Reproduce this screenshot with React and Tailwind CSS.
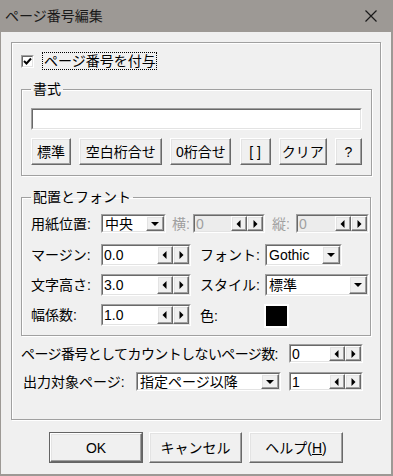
import React from 'react';

const raised =
  'bg-[#f0f0f0] border border-t-white border-l-white border-r-[#696969] border-b-[#696969] shadow-[inset_-1px_-1px_0_#a0a0a0,inset_1px_1px_0_#e3e3e3]';

const Sunken = ({ className, inner, children }) => (
  <div className={`border border-t-[#a0a0a0] border-l-[#a0a0a0] border-r-white border-b-white ${className}`}>
    <div className={`h-full flex border border-t-[#696969] border-l-[#696969] border-r-[#e3e3e3] border-b-[#e3e3e3] ${inner}`}>
      {children}
    </div>
  </div>
);

const Tri = ({ dir }) => (
  <svg width="8" height="8" viewBox="0 0 8 8">
    {dir === 'left' && <polygon points="5.5,0 5.5,8 1.5,4" fill="#000" />}
    {dir === 'right' && <polygon points="2.5,0 2.5,8 6.5,4" fill="#000" />}
    {dir === 'down' && <polygon points="0,2 8,2 4,6" fill="#000" />}
  </svg>
);

const Spin = ({ value, className, disabled }) => (
  <Sunken className={className} inner={disabled ? 'bg-[#ececec]' : 'bg-white'}>
    <span className={`flex-1 flex items-center pl-[1px] leading-none ${disabled ? 'text-[#a0a0a0]' : ''}`}>{value}</span>
    <span className={`w-[16px] flex items-center justify-center ${raised}`}><Tri dir="left" /></span>
    <span className={`w-[16px] flex items-center justify-center ${raised}`}><Tri dir="right" /></span>
  </Sunken>
);

const Select = ({ value, className }) => (
  <Sunken className={className} inner="bg-white">
    <span className="flex-1 flex items-center pl-[2px] leading-none">{value}</span>
    <span className={`w-[18px] flex items-center justify-center ${raised}`}><Tri dir="down" /></span>
  </Sunken>
);

const Btn = ({ children, className }) => (
  <button className={`h-full flex items-center justify-center leading-none ${raised} ${className}`}>{children}</button>
);

const Label = ({ children, className }) => (
  <span className={`flex items-center leading-none whitespace-nowrap ${className}`}>{children}</span>
);

const etched = 'border border-[#a0a0a0] shadow-[inset_1px_1px_0_#fff,1px_1px_0_#fff]';

export default function App() {
  return (
    <div className="w-[393px] h-[476px] bg-[#f0f0f0] flex flex-col text-[14px] text-black font-['Liberation_Sans','Noto_Sans_CJK_JP',sans-serif]">
      <div className="h-[32px] shrink-0 bg-[#9d9995] flex items-center justify-between pl-[5px] pr-[16px]">
        <span className="leading-none text-[#1a1a1a]">ページ番号編集</span>
        <svg width="12" height="12" viewBox="0 0 12 12">
          <path d="M0.5 0.5 L11.5 11.5 M11.5 0.5 L0.5 11.5" stroke="#1a1a1a" strokeWidth="1.2" />
        </svg>
      </div>

      <div className="flex-1 flex flex-col border-l border-r-2 border-b-2 border-[#9d9995]">
        <div className={`mt-[10px] ml-[10px] w-[370px] h-[378px] flex flex-col ${etched}`}>
          <div className="mt-[9px] ml-[9px] h-[18px] flex items-center">
            <Sunken className="w-[13px] h-[13px]" inner="bg-white items-center justify-center">
              <svg width="9" height="9" viewBox="0 0 9 9">
                <path d="M1 4 L3.5 6.5 L8 1.5" stroke="#000" strokeWidth="2" fill="none" />
              </svg>
            </Sunken>
            <span className="ml-[8px] w-[115px] h-[18px] border border-dotted border-black flex items-center pl-[1px] leading-none whitespace-nowrap">
              ページ番号を付与
            </span>
          </div>

          <fieldset className={`mt-[11px] ml-[9px] w-[350px] pb-[10px] ${etched}`}>
            <legend className="ml-[9px] px-[2px] leading-[16px]">書式</legend>
            <div className="mt-[11px] mx-[9px] flex flex-col">
              <Sunken className="h-[22px] w-[331px]" inner="bg-white" />
              <div className="mt-[8px] h-[27px] flex justify-between">
                <Btn className="w-[40px]">標準</Btn>
                <Btn className="w-[83px]">空白桁合せ</Btn>
                <Btn className="w-[61px]">0桁合せ</Btn>
                <Btn className="w-[31px]">[ ]</Btn>
                <Btn className="w-[48px]">クリア</Btn>
                <Btn className="w-[27px]">?</Btn>
              </div>
            </div>
          </fieldset>

          <fieldset className={`mt-[13px] ml-[9px] w-[350px] pb-[7px] ${etched}`}>
            <legend className="ml-[9px] px-[2px] leading-[16px]">配置とフォント</legend>
            <div className="pl-[9px] flex flex-col">
              <div className="mt-[9px] h-[19px] flex">
                <Label className="w-[70px]">用紙位置:</Label>
                <Select value="中央" className="w-[65px] h-full" />
                <Label className="ml-[6px] w-[21px] text-[#a0a0a0]">横:</Label>
                <Spin value="0" disabled className="w-[72px] h-full" />
                <Label className="ml-[7px] w-[24px] text-[#a0a0a0]">縦:</Label>
                <Spin value="0" disabled className="w-[73px] h-full" />
              </div>
              <div className="mt-[11px] h-[22px] flex">
                <Label className="w-[70px]">マージン:</Label>
                <Spin value="0.0" className="w-[90px] h-full" />
                <Label className="ml-[9px] w-[65px]">フォント:</Label>
                <Select value="Gothic" className="w-[77px] h-full" />
              </div>
              <div className="mt-[8px] h-[22px] flex">
                <Label className="w-[70px]">文字高さ:</Label>
                <Spin value="3.0" className="w-[90px] h-full" />
                <Label className="ml-[9px] w-[65px]">スタイル:</Label>
                <Select value="標準" className="w-[104px] h-full" />
              </div>
              <div className="mt-[8px] h-[24px] flex">
                <Label className="w-[70px] h-[22px]">幅係数:</Label>
                <Spin value="1.0" className="w-[90px] h-[22px]" />
                <Label className="ml-[9px] w-[64px]">色:</Label>
                <div className="w-[25px] h-[24px] bg-black border-2 border-white" />
              </div>
            </div>
          </fieldset>

          <div className="mt-[8px] ml-[9px] h-[19px] flex">
            <Label className="w-[268px] tracking-[-0.6px]">ページ番号としてカウントしないページ数:</Label>
            <Spin value="0" className="w-[74px] h-full" />
          </div>
          <div className="mt-[9px] ml-[9px] h-[19px] flex">
            <Label className="w-[115px] pl-[2px]">出力対象ページ:</Label>
            <Select value="指定ページ以降" className="w-[145px] h-full" />
            <Spin value="1" className="ml-[8px] w-[74px] h-full" />
          </div>
        </div>

        <div className="mt-[12px] ml-[48px] h-[31px] flex">
          <div className="w-[94px] h-full border border-[#646464]">
            <Btn className="w-full">OK</Btn>
          </div>
          <Btn className="ml-[6px] w-[93px]">キャンセル</Btn>
          <Btn className="ml-[7px] w-[94px]">
            ヘルプ(<span className="underline">H</span>)
          </Btn>
        </div>
      </div>
    </div>
  );
}
